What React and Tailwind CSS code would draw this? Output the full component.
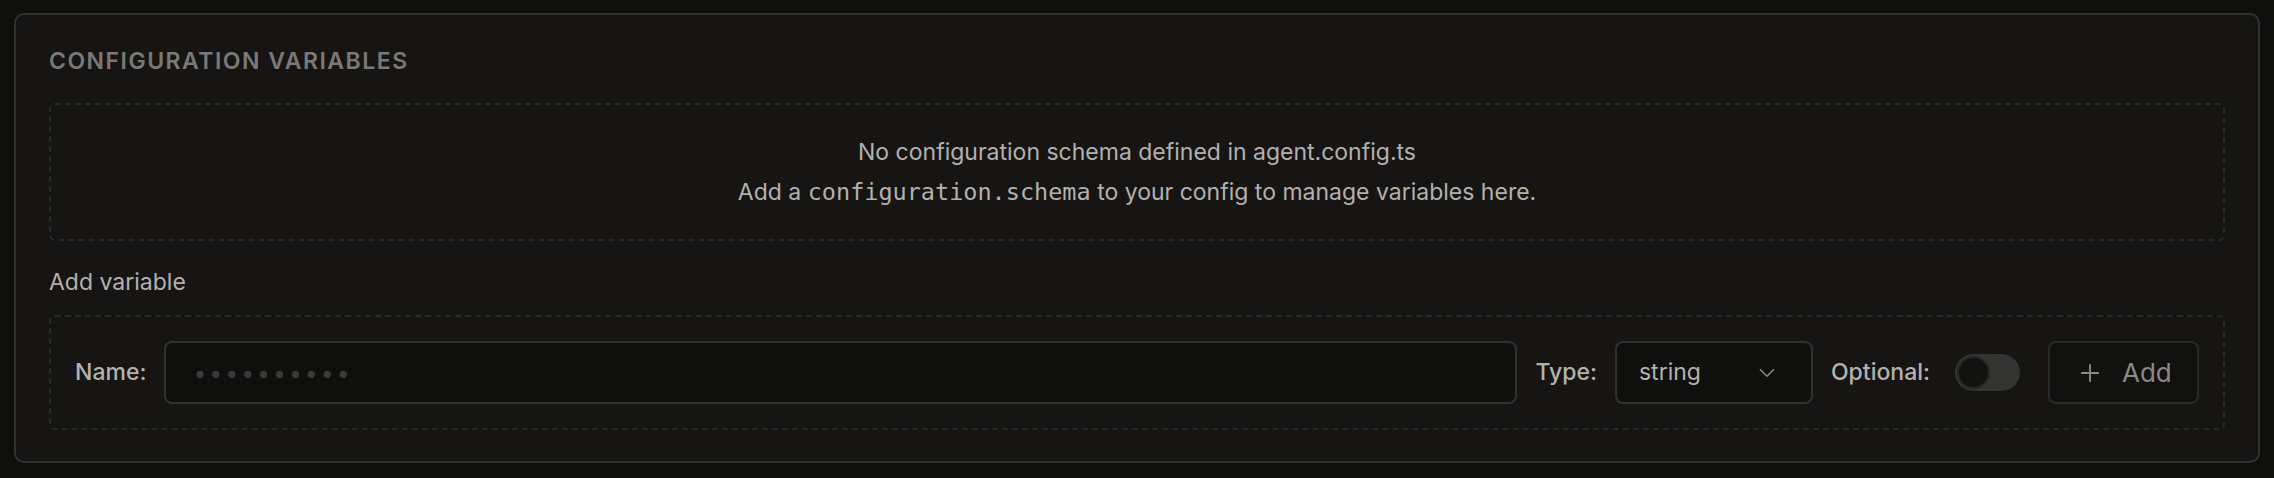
import { Plus, ChevronDown } from 'lucide-react'

const font = { fontFamily: 'Inter, "Noto Sans", sans-serif' }

const Field = ({ label, children }) => (
  <>
    <span className="shrink-0 text-[23px] font-medium text-[#b4b2ae]">{label}</span>
    {children}
  </>
)

export default function App() {
  return (
    <div className="min-h-[478px] bg-[#0f0f0e] pt-[13px] pr-[14px] pb-[16px] pl-[14px]" style={font}>
      <div className="rounded-[10px] border-2 border-[#323231] bg-[#161514] px-[33px] pt-[30px] pb-[31px]">
        <h2 className="text-[23px] leading-[32px] font-semibold uppercase tracking-[0.065em] text-[#7b7975]">
          Configuration Variables
        </h2>

        {/* empty schema notice */}
        <div className="mt-[26px] flex h-[138px] flex-col items-center justify-center rounded-[6px] border-2 border-dashed border-[#282827] text-[23px] leading-[40px] text-[#b3b1ad]">
          <p>No configuration schema defined in agent.config.ts</p>
          <p>
            Add a{' '}
            <code className="text-[23.5px]" style={{ fontFamily: '"DejaVu Sans Mono", "Liberation Mono", monospace' }}>
              configuration.schema
            </code>{' '}
            to your config to manage variables here.
          </p>
        </div>

        <div className="mt-[25px] text-[23px] leading-[32px] text-[#b3b1ad]">Add variable</div>

        <div className="mt-[17px] flex items-center gap-[18px] rounded-[6px] border-2 border-dashed border-[#282827] p-6">
          <Field label="Name:">
            <input
              type="text"
              placeholder="••••••••••"
              className="h-[63px] min-w-0 flex-1 rounded-[8px] border-2 border-[#313130] bg-[#0f0f0e] px-[27px] text-[23px] text-[#b3b1ad] outline-none placeholder:tracking-[0.13em] placeholder:text-[#3a3a39]"
            />
          </Field>

          <Field label="Type:">
            <button className="flex h-[63px] w-[198px] shrink-0 items-center justify-between rounded-[8px] border-2 border-[#313130] bg-[#0f0f0e] pr-[31px] pl-[22px] text-[23px] text-[#b4b2ae]">
              string
              <ChevronDown className="size-[26px] text-[#858380]" strokeWidth={1.6} />
            </button>
          </Field>

          <Field label="Optional:">
            <button className="ml-[7px] mr-[10px] flex h-[37px] w-[65px] shrink-0 items-center rounded-full bg-[#333332] p-[2px]">
              <span className="size-[33px] rounded-full border-2 border-[#262625] bg-[#121211]" />
            </button>
          </Field>

          <button className="flex h-[63px] w-[151px] shrink-0 items-center gap-[18px] rounded-[8px] border-2 border-[#2a2a29] bg-[#111110] pl-[26px] text-[26px] text-[#8b8985]">
            <Plus className="size-[28px]" strokeWidth={1.6} />
            Add
          </button>
        </div>
      </div>
    </div>
  )
}
